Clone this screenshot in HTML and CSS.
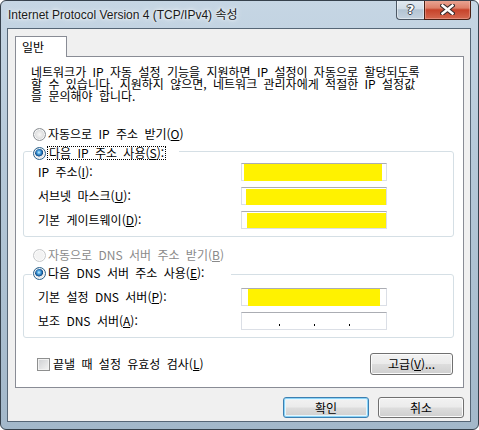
FILE: index.html
```html
<!DOCTYPE html>
<html lang="ko">
<head>
<meta charset="utf-8">
<title>Internet Protocol Version 4 (TCP/IPv4) 속성</title>
<link rel="stylesheet" href="styles.css">
</head>
<body>
<div class="window">
  <div class="titlebar">
    <span class="title">Internet Protocol Version 4 (TCP/IPv4) 속성</span>
    <div class="caption">
      <div class="cap help"><span class="q">?</span></div>
      <div class="cap close">
        <svg width="15" height="11" viewBox="0 0 15 11">
          <path d="M2.5 1.5 L12.5 9.5 M12.5 1.5 L2.5 9.5" stroke="#3b2b2b" stroke-width="4.6" stroke-linecap="square" fill="none"/>
          <path d="M2.5 1.5 L12.5 9.5 M12.5 1.5 L2.5 9.5" stroke="#ffffff" stroke-width="2.4" stroke-linecap="square" fill="none"/>
        </svg>
      </div>
    </div>
  </div>
  <div class="client">
    <div class="tabs"><div class="tab">일반</div></div>
    <div class="panel">
      <p class="desc">네트워크가 IP 자동 설정 기능을 지원하면 IP 설정이 자동으로 할당되도록<br>할 수 있습니다. 지원하지 않으면, 네트워크 관리자에게 적절한 IP 설정값<br>을 문의해야 합니다.</p>

      <div class="opt opt-ip"><span class="radio"></span><span class="lbl">자동으로 IP 주소 받기(<u>O</u>)</span></div>
      <div class="group group-ip">
        <div class="head head-ip"><span class="radio checked"></span><span class="lbl focus">다음 IP 주소 사용(<u>S</u>):</span></div>
        <div class="field first"><span class="lbl">IP 주소(<u>I</u>):</span><div class="box"><div class="redact r1"></div></div></div>
        <div class="field"><span class="lbl">서브넷 마스크(<u>U</u>):</span><div class="box"><div class="redact r2"></div></div></div>
        <div class="field"><span class="lbl">기본 게이트웨이(<u>D</u>):</span><div class="box"><div class="redact r3"></div></div></div>
      </div>

      <div class="opt opt-dns"><span class="radio disabled"></span><span class="lbl dim">자동으로 DNS 서버 주소 받기(<u>B</u>)</span></div>
      <div class="group group-dns">
        <div class="head head-dns"><span class="radio checked"></span><span class="lbl">다음 DNS 서버 주소 사용(<u>E</u>):</span></div>
        <div class="field first"><span class="lbl">기본 설정 DNS 서버(<u>P</u>):</span><div class="box"><div class="redact r4"></div></div></div>
        <div class="field"><span class="lbl">보조 DNS 서버(<u>A</u>):</span><div class="box ipbox"><span class="seg"></span><span class="dot"></span><span class="seg"></span><span class="dot"></span><span class="seg"></span><span class="dot"></span><span class="seg"></span></div></div>
      </div>

      <div class="bottom-row">
        <label class="check"><span class="checkbox"></span><span class="lbl">끝낼 때 설정 유효성 검사(<u>L</u>)</span></label>
        <button class="btn adv" type="button">고급(<u>V</u>)...</button>
      </div>
    </div>
    <div class="actions">
      <button class="btn default" type="button">확인</button>
      <button class="btn" type="button">취소</button>
    </div>
  </div>
</div>
</body>
</html>
```

FILE: styles.css
```css
* { box-sizing: border-box; }
html, body { margin: 0; padding: 0; }
body {
  width: 479px; height: 430px; overflow: hidden; background: #ffffff;
  font-family: "Noto Sans CJK KR", "Noto Sans", sans-serif;
  font-size: 12px; color: #000;
}
u { text-decoration: underline; text-underline-offset: 1px; }

.window {
  width: 479px; height: 430px;
  border: 1px solid #36414c; border-radius: 6px;
  background: linear-gradient(180deg, #c6d6e4 0%, #b6c9d9 35%, #a3b8ca 100%);
  display: flex; flex-direction: column; overflow: hidden;
}
.titlebar { height: 27px; flex: none; display: flex; align-items: flex-start; padding-left: 7px; }
.title {
  flex: 1; white-space: nowrap;
  font-family: "Liberation Sans", "Noto Sans CJK KR", sans-serif;
  font-size: 12px; line-height: 28px; color: #1a1a1a;
  text-shadow: 0 0 6px #fff, 0 0 3px rgba(255,255,255,0.9);
}
.caption { display: flex; margin-top: -1px; margin-right: 7px; }
.cap { height: 20px; display: flex; align-items: center; justify-content: center; }
.help {
  width: 28px; border: 1px solid #4c5865; border-top: none; border-right: none;
  border-radius: 0 0 0 4px;
  background: linear-gradient(180deg, #e3ebf2 0%, #d2dde7 45%, #b3c4d3 52%, #c5d3df 100%);
  box-shadow: inset 0 0 0 1px rgba(255,255,255,0.45);
}
.q {
  font-family: "DejaVu Sans", sans-serif; font-weight: bold; font-size: 13px; line-height: 13px; color: #fff;
  text-shadow: -1px 0 #3a4048, 1px 0 #3a4048, 0 -1px #3a4048, 0 1px #3a4048;
}
.close {
  width: 47px; border: 1px solid #4a2014; border-top: none;
  border-radius: 0 0 4px 0;
  background: linear-gradient(180deg, #eaa897 0%, #de8069 42%, #c7432a 52%, #d4684f 100%);
  box-shadow: inset 0 0 0 1px rgba(255,210,200,0.35);
}

.client {
  flex: 1; margin: 0 7px 7px 6px;
  border: 1px solid #566676; background: #f0f0f0;
  display: flex; flex-direction: column; padding: 7px 0 0 7px;
}
.tabs { display: flex; }
.tab {
  position: relative; z-index: 1;
  width: 52px; height: 21px; margin-bottom: -1px;
  border: 1px solid #898c95; border-bottom: none; background: #fff;
  padding-left: 6px; line-height: 19px;
}
.panel {
  width: 449px; height: 332px;
  border: 1px solid #898c95; background: #fff;
  word-spacing: 3px;
}
.desc { margin: 0; padding: 9px 0 0 15px; line-height: 12px; white-space: nowrap; }

.opt { display: flex; align-items: center; height: 16px; padding-left: 17px; }
.opt-ip { margin-top: 24px; }
.opt-dns { margin-top: 10px; }
.lbl { line-height: 12px; white-space: nowrap; }
.opt .lbl, .head .lbl { margin-left: 2px; }
.dim { color: #8a8a8a; }
.focus { outline: 1px dotted #000; outline-offset: 0; padding: 0 1px; }

.radio {
  flex: none; width: 13px; height: 13px; border-radius: 50%;
  border: 1px solid #8b8f94;
  background: radial-gradient(circle at 50% 50%, #f7f7f7 0, #e6e6e6 3px, #cfd2d6 5.5px);
  box-shadow: inset 0 0 0 1px #f8f8f8;
}
.radio.checked {
  border-color: #2c628b;
  background: radial-gradient(circle at 45% 40%, #d2f3ff 0, #5fb4e8 1.4px, #1f6db2 3px, #15497e 3.8px, #f0f0f0 4.4px, #dcdfe3 6px);
}
.radio.disabled {
  border-color: #c6c8ca;
  background: #f3f3f3; box-shadow: inset 0 0 0 1px #fbfbfb;
}

.group {
  width: 431px; margin-left: 7px; padding: 0 0 4px 0;
  border: 1px solid #d5dfe5; border-radius: 3px;
}
.group-ip { margin-top: 9px; }
.group-dns { margin-top: 11px; }
.head {
  display: flex; align-items: center; height: 16px; width: max-content;
  margin-left: 8px; background: #fff; padding: 0 14px 0 1px;
}
.head-ip { margin-top: -7px; }
.head-dns { margin-top: -10px; padding-right: 27px; }
.field {
  display: grid; grid-template-columns: 203px 146px; align-items: center;
  height: 24px; padding-left: 14px;
}
.head-ip + .field { margin-top: -1px; }
.head-dns + .field { margin-top: 4px; }
.box {
  height: 18px; border: 1px solid #dbdfe6; border-top-color: #abadb3;
  background: #fff; display: flex; align-items: flex-start;
}
.redact { background: #fff200; }
.r1 { margin-left: 2px; width: 138px; height: 17px; }
.r2 { margin-left: 4px; width: 141px; height: 16px; margin-top: 1px; }
.r3 { margin-left: 5px; width: 140px; height: 15px; margin-top: 1px; }
.r4 { margin-left: 6px; width: 132px; height: 17px; }
.ipbox { padding-left: 3px; }
.seg { width: 34px; flex: none; }
.dot { width: 1px; height: 2px; background: #000; flex: none; margin-top: 11px; }

.bottom-row {
  display: flex; align-items: center; justify-content: space-between;
  height: 22px; margin-top: 15px; padding: 0 10px 0 21px;
}
.check { display: flex; align-items: center; }
.checkbox {
  width: 13px; height: 13px; border: 1px solid #8e8f8f;
  background: linear-gradient(135deg, #cdcfd2 0%, #f4f4f4 100%);
  box-shadow: inset 0 0 0 1px #f2f2f2;
}
.check .lbl { margin-left: 3px; }

.btn {
  font-family: "Noto Sans CJK KR", "Noto Sans", sans-serif; font-size: 12px; color: #000;
  height: 21px; padding: 0; margin: 0;
  border: 1px solid #707070; border-radius: 3px;
  background: linear-gradient(180deg, #f2f2f2 0%, #ebebeb 48%, #dddddd 52%, #cfcfcf 100%);
  box-shadow: inset 0 0 0 1px #fbfbfb;
  line-height: 12px; word-spacing: 0;
}
.adv { width: 83px; height: 22px; }
.actions { width: 449px; display: flex; justify-content: flex-end; gap: 9px; margin-top: 9px; }
.actions .btn { width: 86px; }
.btn.default { border-color: #3c7fb1; box-shadow: inset 0 0 0 1px #8ad3f7, inset 0 0 0 2px #e6f6fd; }
```
